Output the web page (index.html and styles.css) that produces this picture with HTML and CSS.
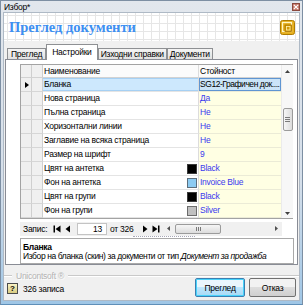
FILE: index.html
```html
<!DOCTYPE html>
<html lang="bg">
<head>
<meta charset="utf-8">
<title>Избор</title>
<link rel="stylesheet" href="styles.css">
</head>
<body>
<div class="window">
  <div class="titlebar">
    <span class="title">Избор*</span>
    <span class="close"><svg width="6" height="6" viewBox="0 0 6 6"><path d="M0.8 0.8L5.2 5.2M5.2 0.8L0.8 5.2" stroke="#fff" stroke-width="1.2"/></svg></span>
  </div>
  <div class="client">
    <div class="banner">
      <h1>Преглед документи</h1>
      <svg class="logo" width="15" height="15" viewBox="0 0 15 15">
        <rect x="0.5" y="0.5" width="14" height="14" rx="2" fill="#e6b01e" stroke="#b07c00"/>
        <rect x="2.5" y="2.5" width="9" height="9" fill="none" stroke="#fff6c8" stroke-width="1.2"/>
        <rect x="5" y="5" width="6.5" height="6.5" fill="#d49a08" stroke="#a87400" stroke-width="0.8"/>
        <rect x="6.5" y="6.5" width="3.5" height="3.5" fill="none" stroke="#fff2b0" stroke-width="0.8"/>
      </svg>
    </div>
    <div class="tabs">
      <div class="tab">Преглед</div>
      <div class="tab active">Настройки</div>
      <div class="tab">Изходни справки</div>
      <div class="tab">Документи</div>
    </div>
    <div class="panel">
      <div class="grid">
        <div class="sel hdr"></div><div class="ind hdr"></div><div class="name hdr">Наименование</div><div class="val hdr">Стойност</div>
        <div class="vscroll">
          <span class="arr up"><svg width="5" height="3" viewBox="0 0 5 3"><path d="M0 3L2.5 0L5 3Z"/></svg></span>
          <span class="thumb"><i></i><i></i><i></i></span>
          <span class="arr down"><svg width="5" height="3" viewBox="0 0 5 3"><path d="M0 0L2.5 3L5 0Z"/></svg></span>
        </div>

        <div class="sel"><span class="pointer"></span></div><div class="ind"></div><div class="name cur">Бланка</div><div class="val cur">SG12-Графичен док....</div>
        <div class="sel"></div><div class="ind"></div><div class="name">Нова страница</div><div class="val">Да</div>
        <div class="sel"></div><div class="ind"></div><div class="name">Пълна страница</div><div class="val">Не</div>
        <div class="sel"></div><div class="ind"></div><div class="name">Хоризонтални линии</div><div class="val">Не</div>
        <div class="sel"></div><div class="ind"></div><div class="name">Заглавие на всяка страница</div><div class="val">Не</div>
        <div class="sel"></div><div class="ind"></div><div class="name">Размер на шрифт</div><div class="val">9</div>
        <div class="sel"></div><div class="ind"></div><div class="name">Цвят на антетка<span class="sw sw-black"></span></div><div class="val">Black</div>
        <div class="sel"></div><div class="ind"></div><div class="name">Фон на антетка<span class="sw sw-blue"></span></div><div class="val">Invoice Blue</div>
        <div class="sel"></div><div class="ind"></div><div class="name">Цвят на групи<span class="sw sw-black"></span></div><div class="val">Black</div>
        <div class="sel"></div><div class="ind"></div><div class="name">Фон на групи<span class="sw sw-silver"></span></div><div class="val">Silver</div>
      </div>

      <div class="nav">
        <span class="nav-label">Запис:</span>
        <span class="nb"><svg width="8" height="8" viewBox="0 0 8 8"><rect x="0.5" y="0.5" width="1.5" height="7"/><path d="M7.5 0.5L2.5 4L7.5 7.5Z"/></svg></span>
        <span class="nb"><svg width="8" height="8" viewBox="0 0 8 8"><path d="M6 0.5L1.5 4L6 7.5Z"/></svg></span>
        <span class="rec">13</span>
        <span class="nav-of">от 326</span>
        <span class="nb"><svg width="8" height="8" viewBox="0 0 8 8"><path d="M2 0.5L6.5 4L2 7.5Z"/></svg></span>
        <span class="nb"><svg width="8" height="8" viewBox="0 0 8 8"><path d="M0.5 0.5L5.5 4L0.5 7.5Z"/><rect x="6" y="0.5" width="1.5" height="7"/></svg></span>
        <div class="hscroll">
          <span class="harr"><svg width="3" height="5" viewBox="0 0 3 5"><path d="M3 0L0 2.5L3 5Z"/></svg></span>
          <span class="hthumb"><i></i><i></i><i></i></span>
          <span class="harr right"><svg width="3" height="5" viewBox="0 0 3 5"><path d="M0 0L3 2.5L0 5Z"/></svg></span>
        </div>
      </div>
      <div class="splitter"><span class="grip"></span></div>

      <div class="desc">
        <div class="desc-title">Бланка</div>
        <div class="desc-text">Избор на бланка (скин) за документи от тип <i>Документ за продажба</i></div>
      </div>
    </div>

    <div class="brand"><span class="line short"></span><span class="brand-text">Unicontsoft ®</span><span class="line"></span></div>

    <div class="footer">
      <span class="help">?</span>
      <span class="count">326 записа</span>
      <button class="btn default">Преглед</button>
      <button class="btn">Отказ</button>
    </div>
  </div>
</div>
</body>
</html>
```

FILE: styles.css
```css
* { box-sizing: border-box; }

html, body {
  margin: 0;
  padding: 0;
}

body {
  width: 303px;
  height: 305px;
  overflow: hidden;
  font-family: "Liberation Sans", Arial, sans-serif;
  font-size: 8.5px;
  letter-spacing: -0.25px;
  color: #000;
  background: #fff;
}

.window {
  width: 303px;
  height: 305px;
  display: flex;
  flex-direction: column;
  border: 1px solid #7d8fa3;
  border-bottom-color: #5f8fb8;
  background: linear-gradient(#e2e7ed, #d5dfea 60%, #9fc6e6);
  padding: 0 2px 3px 2px;
}

.titlebar {
  height: 11px;
  display: flex;
  align-items: center;
  justify-content: space-between;
  padding-left: 1px;
}

.title {
  font-size: 8.5px;
  line-height: 10px;
}

.close {
  width: 8px;
  height: 8px;
  margin-top: 1px;
  display: flex;
  align-items: center;
  justify-content: center;
  background: #c7796a;
  border: 1px solid #8b4a40;
}

.client {
  flex: 1;
  display: flex;
  flex-direction: column;
  background: #f0f0f0;
  border: 1px solid #aeb9c5;
}

.banner {
  height: 28px;
  display: flex;
  align-items: center;
  justify-content: space-between;
  padding: 0 4px 0 5px;
  background-color: #fff;
  background-image:
    linear-gradient(to right, #e6e6e6 1px, transparent 1px),
    linear-gradient(to bottom, #e6e6e6 1px, transparent 1px);
  background-size: 8px 8px;
  background-position: 3px 2px;
}

.banner h1 {
  margin: 0;
  font-family: "Liberation Serif", "Times New Roman", serif;
  font-weight: bold;
  font-size: 14.5px;
  letter-spacing: 0;
  color: #3d8ff2;
}

.logo { display: block; }

.tabs {
  height: 18px;
  display: flex;
  align-items: flex-end;
  padding-left: 3px;
}

.tab {
  height: 11px;
  padding: 0 2px;
  line-height: 10px;
  border: 1px solid #8e9093;
  border-bottom: 0;
  background: linear-gradient(#f4f4f4, #e1e1e1);
  white-space: nowrap;
}

.tab:first-child { padding: 0 3px; }

.tab.active {
  height: 16px;
  margin-bottom: -1px;
  position: relative;
  z-index: 1;
  padding: 2px 5px 0;
  background: #fff;
}

.panel {
  height: 206px;
  margin: 0 1px 0 1px;
  border: 1px solid #898c95;
  background: #fff;
  padding: 4px 3px 0 14px;
  display: flex;
  flex-direction: column;
}

.grid {
  width: 273px;
  display: grid;
  grid-template-columns: 11px 11px 156px 82px 12px;
  grid-template-rows: 13px repeat(10, 14px);
  border: 1px solid #a3a3a3;
  border-right: 0;
}

.grid > div {
  white-space: nowrap;
  overflow: hidden;
}

.sel, .ind {
  background: #f0f0f0;
  border-right: 1px solid #cfcfcf;
  border-bottom: 1px solid #d6d6d6;
  display: flex;
  align-items: center;
}

.name {
  display: flex;
  align-items: center;
  justify-content: space-between;
  padding-left: 1px;
  line-height: 13px;
  border-right: 1px solid #dcdcdc;
  border-bottom: 1px solid #e4e4e4;
  background: #fff;
}

.val {
  padding-left: 1px;
  line-height: 13px;
  background: #ffffe3;
  color: #3a3aef;
  border-bottom: 1px solid #ebebd6;
}

.hdr {
  background: #fbfbfb;
  color: #000;
  line-height: 12px;
  border-bottom: 1px solid #d2d2d2;
}

.sel.hdr, .ind.hdr { background: #f0f0f0; }

.name.cur {
  background: #cde8fd;
  box-shadow: inset 0 1px 0 #a6d0f3, inset 0 -1px 0 #a6d0f3;
}

.val.cur {
  background: #cbe4f8;
  color: #000;
  box-shadow: inset 0 0 0 1px #5f95d2;
  padding-left: 1px;
  letter-spacing: -0.45px;
}

.pointer {
  margin-left: 4px;
  width: 0;
  height: 0;
  border-left: 4px solid #000;
  border-top: 3.5px solid transparent;
  border-bottom: 3.5px solid transparent;
}

.sw {
  width: 10px;
  height: 10px;
  margin-right: 1px;
  border: 1px solid #6a6a6a;
  flex: none;
}

.sw-black { background: #000; border-color: #3a3a3a; }
.sw-blue { background: #8ccbf2; border-color: #5c6e7c; }
.sw-silver { background: #c0c0c0; border-color: #6c6c6c; }

.vscroll {
  grid-column: 5;
  grid-row: 1 / -1;
  background: #f7f7f7;
  border-left: 1px solid #ebebeb;
  display: flex;
  flex-direction: column;
  align-items: center;
}

.arr {
  height: 12px;
  display: flex;
  align-items: center;
  justify-content: center;
}

.arr svg { fill: #404040; }

.arr.down {
  margin-top: auto;
  align-items: flex-end;
  padding-bottom: 3px;
}

.thumb {
  margin-top: 31px;
  width: 10px;
  height: 23px;
  border: 1px solid #9b9b9b;
  border-radius: 2px;
  background: linear-gradient(to right, #f6f6f6, #dcdcdc);
  display: flex;
  flex-direction: column;
  align-items: center;
  justify-content: center;
  gap: 1px;
}

.thumb i, .hthumb i {
  display: block;
  background: #7a7a7a;
}

.thumb i { width: 5px; height: 1px; }

.nav {
  width: 262px;
  height: 14px;
  margin-top: 3px;
  display: flex;
  align-items: center;
  background: #f0f0f0;
}

.nav-label {
  width: 32px;
  padding-left: 3px;
}

.nb {
  width: 10px;
  height: 12px;
  display: flex;
  align-items: center;
  justify-content: center;
}

.nb + .nb { margin-left: 1px; }

.nb svg { fill: #000; }

.rec {
  width: 30px;
  height: 12px;
  margin: 0 1px 0 4px;
  background: #fff;
  border: 1px solid #c4c4c4;
  text-align: right;
  padding-right: 4px;
  line-height: 10px;
}

.nav-of {
  width: 32px;
  padding-left: 2px;
}

.hscroll {
  flex: 1;
  height: 12px;
  margin-left: 2px;
  display: flex;
  align-items: center;
}

.harr {
  width: 11px;
  height: 12px;
  display: flex;
  align-items: center;
  justify-content: center;
}

.harr svg { fill: #505050; }

.harr.right { margin-left: auto; }

.hthumb {
  width: 46px;
  height: 10px;
  margin-left: 1px;
  border: 1px solid #9b9b9b;
  border-radius: 2px;
  background: linear-gradient(#f6f6f6, #dcdcdc);
  display: flex;
  align-items: center;
  justify-content: center;
  gap: 1px;
}

.hthumb i { width: 1px; height: 4px; }

.splitter {
  height: 2px;
  display: flex;
  align-items: center;
  padding-left: 113px;
}

.grip {
  width: 62px;
  border-top: 1px dotted #a8a8b8;
}

.desc {
  height: 27px;
  border: 1px solid #a9a9a9;
  padding: 4px 2px 0 2px;
  line-height: 9px;
  white-space: nowrap;
}

.desc-title { font-weight: bold; }

.desc-text { letter-spacing: -0.4px; }

.brand {
  height: 10px;
  margin-top: 6px;
  display: flex;
  align-items: center;
}

.line {
  flex: 1;
  height: 2px;
  border-top: 1px solid #c9c9c9;
  border-bottom: 1px solid #fff;
}

.line.short { flex: 0 0 8px; }

.brand-text {
  padding: 0 4px;
  color: #b3b3b3;
  text-shadow: 1px 1px 0 #fff;
  line-height: 10px;
}

.footer {
  height: 19px;
  margin-top: -3px;
  display: flex;
  align-items: center;
  padding: 0 3px;
}

.help {
  width: 11px;
  height: 11px;
  margin-top: 2px;
  border: 1px solid #4c4c4c;
  background: linear-gradient(#fbf3c4, #d8cc82);
  font-weight: bold;
  font-size: 8px;
  line-height: 9px;
  text-align: center;
  letter-spacing: 0;
}

.count {
  margin-left: 5px;
  margin-top: 2px;
}

.btn {
  height: 19px;
  padding: 0;
  font-family: inherit;
  font-size: 8.5px;
  letter-spacing: -0.25px;
  color: #000;
  border: 1px solid #707070;
  border-radius: 2px;
  background: linear-gradient(#f2f2f2 50%, #dddddd 50%, #cfcfcf);
  width: 47px;
}

.btn.default {
  margin-left: auto;
  margin-right: 4px;
  width: 50px;
  border-color: #3c7fb1;
  background: linear-gradient(#eaf6fd 50%, #bee6fd 50%, #a7d9f5);
  box-shadow: inset 0 0 0 1px #48d3fb;
}
```
